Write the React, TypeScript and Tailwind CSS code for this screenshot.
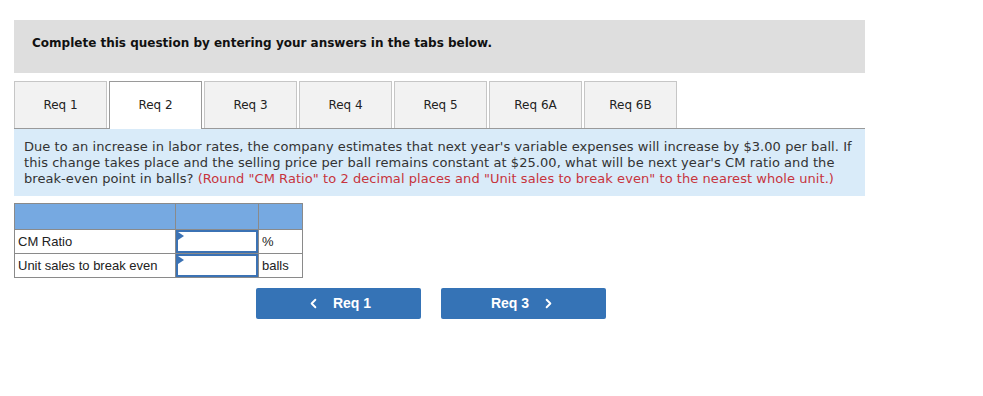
import { ChevronLeft, ChevronRight } from 'lucide-react';

const tabs = ['Req 1', 'Req 2', 'Req 3', 'Req 4', 'Req 5', 'Req 6A', 'Req 6B'];

function AnswerInput() {
  return (
    <div className="relative h-[23px] w-full border-2 border-[#3b72b4] bg-white">
      <span className="absolute left-0 top-0 h-0 w-0 border-y-[4px] border-l-[6px] border-y-transparent border-l-[#3b72b4]" />
    </div>
  );
}

export default function App() {
  return (
    <div className="min-h-[396px] bg-white pl-[14px] pt-[20px] font-['DejaVu_Sans',Verdana,sans-serif] text-[#333]">
      <div className="w-[851px]">
        {/* Instruction banner */}
        <div className="h-[53px] bg-[#dedede] pl-[18px] pt-[14px] text-[12px] font-bold text-[#111]">
          Complete this question by entering your answers in the tabs below.
        </div>

        {/* Tabs */}
        <div className="mt-[8px] flex h-[47px] gap-[2px]">
          {tabs.map((t) => {
            const active = t === 'Req 2';
            return (
              <div
                key={t}
                className={
                  active
                    ? 'relative z-10 -mb-px flex h-[48px] w-[93px] items-center justify-center border border-b-0 border-[#9a9a9a] bg-white pb-px text-[12px] text-[#222]'
                    : 'flex h-[47px] w-[93px] items-center justify-center border border-b-0 border-[#c6c6c6] bg-[#f2f2f2] text-[12px] text-[#222]'
                }
              >
                {t}
              </div>
            );
          })}
        </div>

        {/* Question */}
        <div className="border-t border-[#9a9a9a] bg-[#d9ebf9] pb-[9px] pl-[10px] pt-[10px] text-[13px] leading-[16px] tracking-[0.06px]">
          Due to an increase in labor rates, the company estimates that next year's variable expenses will increase by $3.00 per ball. If
          <br />
          this change takes place and the selling price per ball remains constant at $25.00, what will be next year's CM ratio and the
          <br />
          break-even point in balls?{' '}
          <span className="text-[#c7343d]">
            (Round "CM Ratio" to 2 decimal places and "Unit sales to break even" to the nearest whole unit.)
          </span>
        </div>
      </div>

      {/* Answer table */}
      <table className="mt-[7px] border-collapse font-['Liberation_Sans',Arial,sans-serif] text-[13px] text-[#222]">
        <tbody>
          <tr className="h-[26px] bg-[#76a9e1]">
            <td className="w-[161px] border border-[#8a8a8a]" />
            <td className="w-[83px] border border-[#8a8a8a]" />
            <td className="w-[44px] border border-[#8a8a8a]" />
          </tr>
          <tr className="h-[24px]">
            <td className="border border-[#8a8a8a] px-[3px]">CM Ratio</td>
            <td className="border border-[#8a8a8a] p-0">
              <AnswerInput />
            </td>
            <td className="border border-[#8a8a8a] px-[3px]">%</td>
          </tr>
          <tr className="h-[23px]">
            <td className="border border-[#8a8a8a] px-[3px]">Unit sales to break even</td>
            <td className="border border-[#8a8a8a] p-0">
              <AnswerInput />
            </td>
            <td className="border border-[#8a8a8a] px-[3px]">balls</td>
          </tr>
        </tbody>
      </table>

      {/* Navigation */}
      <div className="mt-[10px] flex gap-[20px] pl-[242px] font-['Liberation_Sans',Arial,sans-serif] text-[14px] font-bold text-white">
        <button className="flex h-[31px] w-[165px] items-center justify-center gap-[12px] rounded-[2px] bg-[#3573b6]">
          <ChevronLeft size={15} strokeWidth={3} />
          <span>Req 1</span>
        </button>
        <button className="flex h-[31px] w-[165px] items-center justify-center gap-[12px] rounded-[2px] bg-[#3573b6]">
          <span>Req 3</span>
          <ChevronRight size={15} strokeWidth={3} />
        </button>
      </div>
    </div>
  );
}
